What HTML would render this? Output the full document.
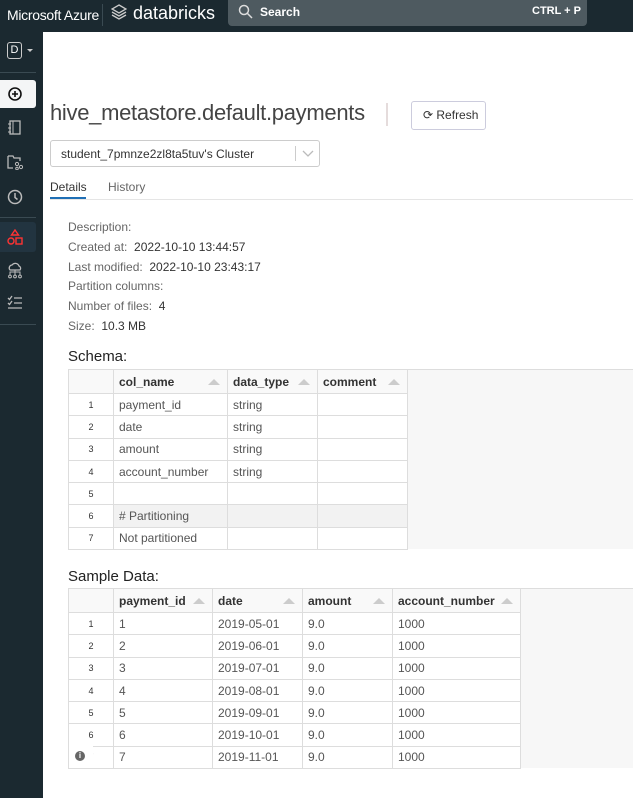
<!DOCTYPE html>
<html><head><meta charset="utf-8"><style>
*{box-sizing:border-box;margin:0;padding:0}
body{width:633px;height:798px;overflow:hidden;background:#fff;font-family:"Liberation Sans",sans-serif;position:relative;color:#333}
.top{position:absolute;left:0;top:0;width:633px;height:32px;background:#1b2930}
.side{position:absolute;left:0;top:32px;width:43px;height:766px;background:#1b2930}
.a{position:absolute}
.t{position:absolute;white-space:nowrap}
table{border-collapse:collapse;position:absolute;font-size:12px}
td{border:1px solid #ddd;height:22.3px;padding:0 5px;color:#555;white-space:nowrap}
td.i{font-size:9px;text-align:center;color:#333}
tr.h td{background:#f9f9f9;color:#333;font-weight:bold;height:24px;position:relative}
.car{position:absolute;right:7px;top:9px;width:0;height:0;border-left:6px solid transparent;border-right:6px solid transparent;border-bottom:6px solid #ccc}
.meta{font-size:12px;color:#666}
.meta b{font-weight:normal;color:#333}
</style></head><body>
<div class="top">
 <div class="t" style="left:7px;top:7px;color:#fff;font-size:14px;letter-spacing:-0.3px">Microsoft Azure</div>
 <div class="a" style="left:102px;top:4px;width:1px;height:22px;background:#3a4a52"></div>
 <svg class="a" style="left:111px;top:4px" width="16" height="18" viewBox="0 0 16 18"><g fill="none" stroke="#ccc" stroke-width="1.3"><path d="M8 1L15 5 8 9 1 5z"/><path d="M1 8l7 4 7-4"/><path d="M1 11l7 4 7-4"/></g></svg>
 <div class="t" style="left:133px;top:3px;color:#fff;font-size:18px">databricks</div>
 <div class="a" style="left:228px;top:0;width:359px;height:26px;background:#4e5a60;border-radius:0 0 4px 4px"></div>
 <svg class="a" style="left:238px;top:4px" width="15" height="15" viewBox="0 0 15 15"><circle cx="6" cy="6" r="4.5" fill="none" stroke="#ddd" stroke-width="1.5"/><path d="M9.5 9.5L14 14" stroke="#ddd" stroke-width="1.5"/></svg>
 <div class="t" style="left:260px;top:5px;color:#fff;font-size:12px;font-weight:bold">Search</div>
 <div class="t" style="left:532px;top:5px;color:#fff;font-size:11px;font-weight:bold">CTRL + P</div>
</div>
<div class="side">
 <div class="a" style="left:7px;top:10px;width:15px;height:17px;border:1px solid #ccc;border-radius:3px;color:#fff;font-size:11px;text-align:center;line-height:15px">D</div>
 <div class="a" style="left:27px;top:17px;border-left:3px solid transparent;border-right:3px solid transparent;border-top:3px solid #ccc"></div>
 <div class="a" style="left:0;top:40px;width:36px;height:1px;background:#3a4a52"></div>
 <div class="a" style="left:0;top:48px;width:36px;height:28px;background:#f4f5f6;border-radius:0 3px 3px 0"></div>
 <svg class="a" style="left:8px;top:55px" width="14" height="14"><circle cx="7" cy="7" r="6" fill="none" stroke="#111" stroke-width="1.6"/><path d="M7 4v6M4 7h6" stroke="#111" stroke-width="1.6"/></svg>
 <svg class="a" style="left:8px;top:88px" width="14" height="15"><rect x="2" y="1" width="10" height="13" fill="none" stroke="#bbb" stroke-width="1.3"/><path d="M5 1v13M0 4h3M0 8h3M0 12h3" stroke="#bbb"/></svg>
 <svg class="a" style="left:7px;top:122px" width="16" height="16"><path d="M1 2h5l1 2h6v3M1 2v12h5" fill="none" stroke="#bbb" stroke-width="1.3"/><circle cx="10" cy="10" r="1.6" fill="none" stroke="#bbb"/><circle cx="14" cy="13" r="1.6" fill="none" stroke="#bbb"/><circle cx="10" cy="14.5" r="1.3" fill="none" stroke="#bbb"/></svg>
 <svg class="a" style="left:7px;top:157px" width="16" height="16"><circle cx="8" cy="8" r="6.5" fill="none" stroke="#bbb" stroke-width="1.5"/><path d="M8 4v4.5l2.5 2" fill="none" stroke="#bbb" stroke-width="1.5"/></svg>
 <div class="a" style="left:0;top:185px;width:36px;height:1px;background:#3a4a52"></div>
 <div class="a" style="left:0;top:190px;width:36px;height:30px;background:#223440;border-radius:0 3px 3px 0"></div>
 <svg class="a" style="left:7px;top:197px" width="16" height="17"><path d="M8 1l3.5 5h-7z" fill="none" stroke="#f33" stroke-width="1.4"/><circle cx="4" cy="12" r="3" fill="none" stroke="#f33" stroke-width="1.4"/><rect x="9" y="9" width="6" height="6" fill="none" stroke="#f33" stroke-width="1.4"/></svg>
 <svg class="a" style="left:7px;top:230px" width="16" height="17"><path d="M3 8a3 3 0 0 1 2-5 4 4 0 0 1 7 1 2.5 2.5 0 0 1 1 4z" fill="none" stroke="#bbb" stroke-width="1.3"/><path d="M8 8v5M3 13v-3h10v3" fill="none" stroke="#bbb"/><circle cx="3" cy="14.5" r="1.4" fill="none" stroke="#bbb"/><circle cx="8" cy="14.5" r="1.4" fill="none" stroke="#bbb"/><circle cx="13" cy="14.5" r="1.4" fill="none" stroke="#bbb"/></svg>
 <svg class="a" style="left:7px;top:263px" width="16" height="15"><path d="M1 3l1.5 1.5L5 1M7 3h8M1 8l1.5 1.5L5 6M7 8h8M1 13h14" fill="none" stroke="#bbb" stroke-width="1.3"/></svg>
 <div class="a" style="left:0;top:292px;width:36px;height:1px;background:#3a4a52"></div>
</div>

<div class="t" style="left:50px;top:100px;font-size:22px;color:#444;letter-spacing:-0.3px">hive_metastore.default.payments</div>
<div class="a" style="left:386px;top:103px;width:2px;height:23px;background:#e5dcdc"></div>
<div class="a" style="left:411px;top:101px;width:75px;height:29px;border:1px solid #ccd;border-radius:3px"></div>
<div class="t" style="left:423px;top:108px;font-size:12px;color:#333">&#x27F3; Refresh</div>
<div class="a" style="left:50px;top:140px;width:270px;height:27px;border:1px solid #ccc;border-radius:3px"></div>
<div class="t" style="left:61px;top:147px;font-size:12px;color:#333">student_7pmnze2zl8ta5tuv's Cluster</div>
<div class="a" style="left:295px;top:146px;width:1px;height:15px;background:#ccc"></div>
<svg class="a" style="left:302px;top:150px" width="12" height="8"><path d="M1 1l5 5 5-5" fill="none" stroke="#bbb" stroke-width="1.3"/></svg>
<div class="t" style="left:50px;top:180px;font-size:12px;color:#333">Details</div>
<div class="t" style="left:108px;top:180px;font-size:12px;color:#666">History</div>
<div class="a" style="left:50px;top:197px;width:36px;height:3px;background:#1f6fb5"></div>
<div class="a" style="left:50px;top:199px;width:583px;height:1px;background:#e5e5e5"></div>

<div class="t meta" style="left:68px;top:220px">Description:</div>
<div class="t meta" style="left:68px;top:240px">Created at: &nbsp;<b>2022-10-10 13:44:57</b></div>
<div class="t meta" style="left:68px;top:260px">Last modified: &nbsp;<b>2022-10-10 23:43:17</b></div>
<div class="t meta" style="left:68px;top:279px">Partition columns:</div>
<div class="t meta" style="left:68px;top:299px">Number of files: &nbsp;<b>4</b></div>
<div class="t meta" style="left:68px;top:319px">Size: &nbsp;<b>10.3 MB</b></div>

<div class="t" style="left:68px;top:348px;font-size:15px;color:#222">Schema:</div>
<div class="a" style="left:407px;top:369px;width:226px;height:180px;background:#f7f7f7;border-top:1px solid #ddd"></div>
<table style="left:68px;top:369px">
<tr class="h"><td style="width:45px"></td><td style="width:114px">col_name<span class="car"></span></td><td style="width:90px">data_type<span class="car"></span></td><td style="width:90px">comment<span class="car"></span></td></tr>
<tr><td class="i">1</td><td>payment_id</td><td>string</td><td></td></tr>
<tr><td class="i">2</td><td>date</td><td>string</td><td></td></tr>
<tr><td class="i">3</td><td>amount</td><td>string</td><td></td></tr>
<tr><td class="i">4</td><td>account_number</td><td>string</td><td></td></tr>
<tr><td class="i">5</td><td></td><td></td><td></td></tr>
<tr style="background:#f2f2f2"><td class="i" style="background:#fff">6</td><td># Partitioning</td><td></td><td></td></tr>
<tr><td class="i">7</td><td>Not partitioned</td><td></td><td></td></tr>
</table>

<div class="t" style="left:68px;top:568px;font-size:15px;color:#222">Sample Data:</div>
<div class="a" style="left:520px;top:588px;width:113px;height:180px;background:#f7f7f7;border-top:1px solid #ddd"></div>
<table style="left:68px;top:588px">
<tr class="h"><td style="width:45px"></td><td style="width:99px">payment_id<span class="car"></span></td><td style="width:90px">date<span class="car"></span></td><td style="width:90px">amount<span class="car"></span></td><td style="width:128px">account_number<span class="car"></span></td></tr>
<tr><td class="i">1</td><td>1</td><td>2019-05-01</td><td>9.0</td><td>1000</td></tr>
<tr><td class="i">2</td><td>2</td><td>2019-06-01</td><td>9.0</td><td>1000</td></tr>
<tr><td class="i">3</td><td>3</td><td>2019-07-01</td><td>9.0</td><td>1000</td></tr>
<tr><td class="i">4</td><td>4</td><td>2019-08-01</td><td>9.0</td><td>1000</td></tr>
<tr><td class="i">5</td><td>5</td><td>2019-09-01</td><td>9.0</td><td>1000</td></tr>
<tr><td class="i">6</td><td>6</td><td>2019-10-01</td><td>9.0</td><td>1000</td></tr>
<tr><td class="i">7</td><td>7</td><td>2019-11-01</td><td>9.0</td><td>1000</td></tr>
</table>
<div class="a" style="left:69px;top:741px;width:24px;height:27px;background:#fff"></div>
<div class="a" style="left:75px;top:751px;width:10px;height:10px;border-radius:50%;background:#666;color:#fff;font-size:8px;font-weight:bold;text-align:center;line-height:10px">i</div>
</body></html>
